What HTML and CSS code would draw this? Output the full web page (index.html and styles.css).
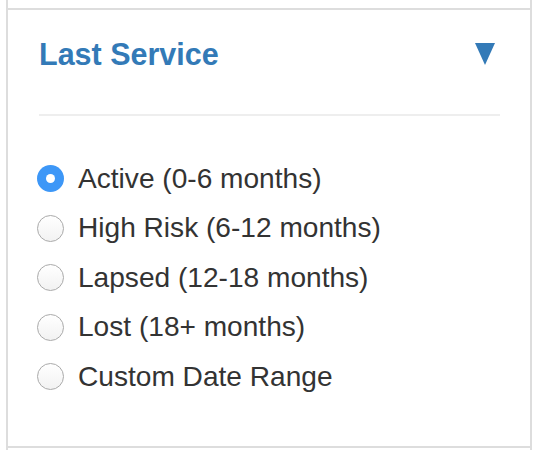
FILE: index.html
```html
<!DOCTYPE html>
<html>
<head>
<meta charset="utf-8">
<link rel="stylesheet" href="styles.css">
</head>
<body>
<div class="wrap">
  <div class="stub"></div>
  <div class="panel">
    <div class="header">
      <h2 class="title">Last Service</h2>
      <span class="caret"></span>
    </div>
    <div class="sep"></div>
    <div class="options">
      <label class="option"><span class="radio checked"></span><span class="label">Active (0-6 months)</span></label>
      <label class="option"><span class="radio"></span><span class="label">High Risk (6-12 months)</span></label>
      <label class="option"><span class="radio"></span><span class="label">Lapsed (12-18 months)</span></label>
      <label class="option"><span class="radio"></span><span class="label">Lost (18+ months)</span></label>
      <label class="option"><span class="radio"></span><span class="label">Custom Date Range</span></label>
    </div>
  </div>
  <div class="stub"></div>
</div>
</body>
</html>
```

FILE: styles.css
```css
html, body {
  margin: 0;
  padding: 0;
  background: #fff;
  font-family: "Liberation Sans", Arial, Helvetica, sans-serif;
  color: #333;
}
.wrap {
  margin-left: 6px;
  width: 526px;
  height: 450px;
  overflow: hidden;
}
.stub {
  height: 8px;
  border-left: 2px solid #ddd;
  border-right: 2px solid #ddd;
}
.panel {
  border: 2px solid #ddd;
  box-sizing: border-box;
  padding: 0 30px 0 31px;
  height: 440px;
}
.header {
  display: flex;
  justify-content: space-between;
  align-items: center;
  padding-top: 26px;
  padding-right: 5px;
}
.title {
  margin: 0;
  font-size: 30.5px;
  line-height: 36px;
  font-weight: bold;
  color: #337ab7;
}
.caret {
  width: 0;
  height: 0;
  border-left: 10.5px solid transparent;
  border-right: 10.5px solid transparent;
  border-top: 22px solid #337ab7;
}
.sep {
  margin-top: 42px;
  height: 2px;
  background: #eee;
}
.options {
  display: flex;
  flex-direction: column;
  padding-top: 38px;
  margin-left: -2px;
}
.option {
  display: flex;
  align-items: center;
  height: 49.5px;
  font-size: 28.1px;
}
.radio {
  width: 27px;
  height: 27px;
  box-sizing: border-box;
  border-radius: 50%;
  border: 1px solid #aaa;
  background: linear-gradient(#fff, #f2f2f2);
  margin-right: 14px;
  flex: none;
  display: flex;
  align-items: center;
  justify-content: center;
}
.radio.checked {
  border: none;
  background: #3d97f7;
}
.radio.checked::after {
  content: "";
  width: 9px;
  height: 9px;
  border-radius: 50%;
  background: #fff;
}
```
